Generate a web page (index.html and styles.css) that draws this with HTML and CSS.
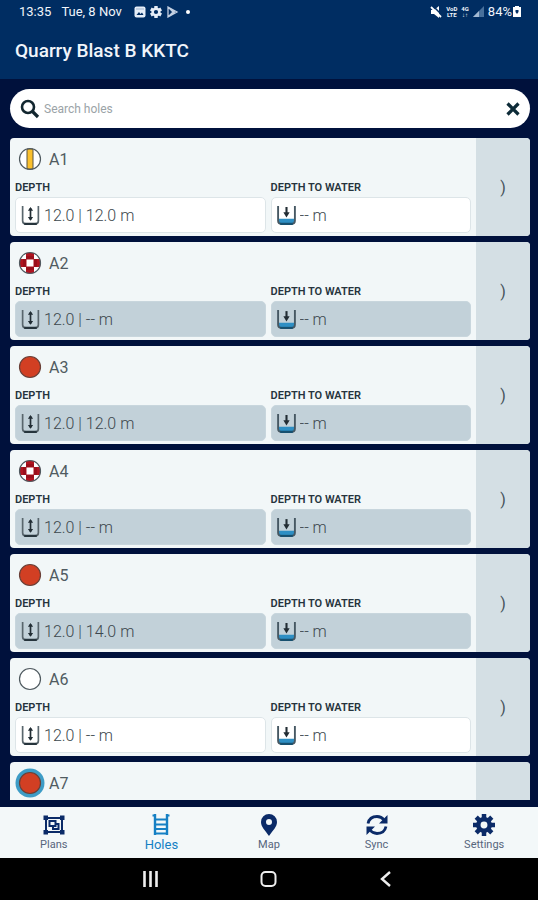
FILE: index.html
```html
<!DOCTYPE html>
<html lang="en">
<head>
  <meta charset="UTF-8" />
  <meta name="viewport" content="width=device-width, initial-scale=1.0" />
  <title>Quarry Blast B KKTC</title>
  <link rel="stylesheet" href="styles.css">
</head>
<body>
  <svg class="sprite" aria-hidden="true">
    <symbol id="icon-depth" viewBox="0 0 18 20">
      <path d="M1.500 1v14q0 3 3 3h9q3 0 3-3V1" fill="none" stroke="#59666d" stroke-width="1.600"/>
      <path d="M3 18h12" stroke="#26343c" stroke-width="2"/>
      <path d="M9 3v11" stroke="#222d34" stroke-width="1.600"/>
      <path d="M6.500 5.500L9 2l2.500 3.500zM6.500 11.500L9 15l2.500-3.500z" fill="#222d34"/>
    </symbol>
    <symbol id="icon-water" viewBox="0 0 18 20">
      <path d="M1.500 13h15v3q0 2-2 2h-11q-2 0-2-2z" fill="#2e8fc4"/>
      <path d="M1 1v14q0 3 3 3h10q3 0 3-3V1" fill="none" stroke="#465863" stroke-width="1.800"/>
      <path d="M3 18h12" stroke="#17506f" stroke-width="2"/>
      <path d="M9 2v6" stroke="#222d34" stroke-width="2"/>
      <path d="M6 7h6l-3 5z" fill="#222d34"/>
    </symbol>
    <symbol id="hole-primed" viewBox="0 0 30 30">
      <circle cx="15" cy="15" r="10.500" fill="#fff"/>
      <path d="M12 5h6v20h-6z" fill="#fbc02d" stroke="#5c5540" stroke-width="1"/>
      <circle cx="15" cy="15" r="10.500" fill="none" stroke="#505a60" stroke-width="1.200"/>
    </symbol>
    <symbol id="hole-check" viewBox="0 0 30 30">
      <circle cx="15" cy="15" r="10.500" fill="#fff"/>
      <path d="M11 5q4-1 8 0v6h6q1 4 0 8h-6v6q-4 1-8 0v-6H5q-1-4 0-8h6z" fill="#b01420"/>
      <path d="M8 11h3v8H8zM19 11h3v8h-3zM11 8h8v3h-8zM11 19h8v3h-8z" fill="#9a101c"/>
      <path d="M11.500 11.500h7v7h-7z" fill="#fff"/>
      <circle cx="15" cy="15" r="10.500" fill="none" stroke="#505a60" stroke-width="1.200"/>
    </symbol>
    <symbol id="hole-loaded" viewBox="0 0 30 30">
      <circle cx="15" cy="15" r="10.500" fill="#d23f23" stroke="#6a4038" stroke-width="1.200"/>
    </symbol>
    <symbol id="hole-active" viewBox="0 0 30 30">
      <circle cx="15" cy="15" r="14.500" fill="#3d9cc6"/>
      <circle cx="15" cy="15" r="10.500" fill="#d23f23" stroke="#6a4038" stroke-width="1.200"/>
    </symbol>
    <symbol id="hole-empty" viewBox="0 0 30 30">
      <circle cx="15" cy="15" r="10.500" fill="#fff" stroke="#505a60" stroke-width="1.200"/>
    </symbol>
  </svg>

  <header class="app-header">
    <div class="status">
      <span class="time">13:35</span>
      <span class="date">Tue, 8 Nov</span>
      <svg width="12" height="12" viewBox="0 0 12 12"><rect x=".5" y=".5" width="11" height="11" rx="2" fill="#e6eef8"/><path d="M2.500 9l2.500-3 1.500 2 1.500-1.500L9.500 9z" fill="#002d62"/><path d="M2 3h8" stroke="#9fb3cd" stroke-width="1"/></svg>
      <svg width="12" height="12" viewBox="0 0 12 12"><path d="M6 0v12M.8 3l10.400 6M.8 9l10.400-6" stroke="#e6eef8" stroke-width="3.400"/><circle cx="6" cy="6" r="3.300" fill="#002d62" stroke="#e6eef8" stroke-width="2.400"/></svg>
      <svg width="13" height="12" viewBox="0 0 13 12"><path d="M2 1l9 5-9 5zM2 1l5 5-5 5M6 3.500l3 4M6 8.500l3-4" fill="none" stroke="#c3d0e2" stroke-width="1.300"/></svg>
      <span class="dot"></span>
      <span class="status-right">
        <svg width="12" height="12" viewBox="0 0 12 12"><path d="M1 4h3l5-4v12L4 8H1z" fill="#fff"/><path d="M3 0l9 9" stroke="#002d62" stroke-width="1.500"/><path d="M1 1l10 10" stroke="#fff" stroke-width="1.800"/></svg>
        <span class="tiny">VoD<br>LTE</span>
        <span class="tiny">4G<br>↓↑</span>
        <svg width="11" height="11" viewBox="0 0 11 11"><path d="M11 0v11H0z" fill="#48709b"/><path d="M6 5v6H0z" fill="#a3b9d2"/></svg>
        <span class="battery">84%</span>
        <svg width="8" height="11" viewBox="0 0 8 11"><path d="M2 0h4v1h2v10H0V1h2z" fill="#fff"/><path d="M2.500 4h3v2L4 8 2.500 6z" fill="#002d62"/></svg>
      </span>
    </div>
    <h1>Quarry Blast B KKTC</h1>
  </header>

  <main>
    <form class="search">
      <svg width="20" height="20" viewBox="0 0 20 20"><circle cx="8" cy="8" r="6" fill="none" stroke="#12262f" stroke-width="2.600"/><path d="M12.500 12.500l5.500 5.500" stroke="#12262f" stroke-width="3.200"/></svg>
      <input type="text" placeholder="Search holes" aria-label="Search holes">
      <button type="reset" aria-label="Clear search">
        <svg width="14" height="14" viewBox="0 0 14 14"><path d="M1.500 1.500l11 11M12.500 1.500l-11 11" stroke="#0d2b38" stroke-width="3.200"/></svg>
      </button>
    </form>
    <div class="holes" id="holes"></div>
  </main>

  <nav class="tabs">
    <a href="#plans">
      <svg width="22" height="22" viewBox="0 0 22 22" fill="none" stroke="#0b2b68"><path d="M3 4h16v14H3z" stroke-width="2"/><path d="M.5 1.500h4.500v4.500H.5zM17 1.500h4.500v4.500H17zM.5 16h4.500v4.500H.5zM17 16h4.500v4.500H17z" fill="#0b2b68" stroke="none"/><path d="M6.500 7h6v5h-6zM12.500 10h3v5H10v-3" stroke-width="2"/></svg>
      <span>Plans</span>
    </a>
    <a href="#holes" class="active">
      <svg width="22" height="22" viewBox="0 0 22 22" fill="none" stroke="#1580c4"><path d="M5 0v21M17 0v21" stroke-width="2.400"/><path d="M2.500 1.500H6M16 1.500h3.500M5 5.500h12M5 10.500h12M5 15h12M5 19.500h12" stroke-width="2"/></svg>
      <span>Holes</span>
    </a>
    <a href="#map">
      <svg width="22" height="22" viewBox="0 0 22 22"><path d="M11 0a8 8 0 0 0-8 8c0 5 4 8 8 14 4-6 8-9 8-14a8 8 0 0 0-8-8zm0 5a3 3 0 1 1 0 6 3 3 0 0 1 0-6z" fill="#0b2b68"/></svg>
      <span>Map</span>
    </a>
    <a href="#sync">
      <svg width="22" height="22" viewBox="0 0 22 22"><path d="M2 9.500C3 5 6.500 2.500 11 2.500c3 0 5.500 1.500 7 3.500M20 12.500c-1 4.500-4.500 7-9 7-3 0-5.500-1.500-7-3.500" fill="none" stroke="#0b2b68" stroke-width="2.800"/><path d="M21.500 1v8.500H13zM.5 21v-8.500H9z" fill="#0b2b68"/></svg>
      <span>Sync</span>
    </a>
    <a href="#settings">
      <svg width="22" height="22" viewBox="0 0 22 22"><path d="M11 0v22M0 11h22M3.200 3.200l15.600 15.600M18.800 3.200L3.200 18.800" stroke="#0b2b68" stroke-width="4.500"/><circle cx="11" cy="11" r="5.700" fill="#f3f8f9" stroke="#0b2b68" stroke-width="4.500"/></svg>
      <span>Settings</span>
    </a>
  </nav>

  <footer class="system-bar">
    <button aria-label="Recent apps"><svg width="18" height="18" viewBox="0 0 18 18"><path d="M2.500 1v16M8.500 1v16M14.500 1v16" stroke="#eee" stroke-width="2.600"/></svg></button>
    <button aria-label="Home"><svg width="18" height="18" viewBox="0 0 18 18"><rect x="1.500" y="2" width="14" height="14" rx="4" fill="none" stroke="#eee" stroke-width="2"/></svg></button>
    <button aria-label="Back"><svg width="18" height="18" viewBox="0 0 18 18"><path d="M12 2L4 9l8 7" fill="none" stroke="#eee" stroke-width="2.400"/></svg></button>
  </footer>

  <script>
    const holes = [
      { name: 'A1', icon: 'primed', depth: '12.0 | 12.0 m', open: true },
      { name: 'A2', icon: 'check', depth: '12.0 | -- m' },
      { name: 'A3', icon: 'loaded', depth: '12.0 | 12.0 m' },
      { name: 'A4', icon: 'check', depth: '12.0 | -- m' },
      { name: 'A5', icon: 'loaded', depth: '12.0 | 14.0 m' },
      { name: 'A6', icon: 'empty', depth: '12.0 | -- m', open: true },
      { name: 'A7', icon: 'active' }
    ];

    function field(id, label, icon, value, open) {
      return `
        <div>
          <label for="${id}">${label}</label>
          <div class="field ${open ? '' : 'locked'}">
            <svg width="19" height="21"><use href="#icon-${icon}"/></svg>
            <input id="${id}" type="text" value="${value}" ${open ? '' : 'readonly'}>
          </div>
        </div>`;
    }

    // A hole without a depth yet only shows its heading
    document.getElementById('holes').innerHTML = holes.map(h => `
      <article class="card ${h.depth ? '' : 'pending'}">
        <div class="card-main">
          <h2><svg width="30" height="30"><use href="#hole-${h.icon}"/></svg>${h.name}</h2>
          ${h.depth ? `<div class="fields">
            ${field(h.name + '-depth', 'DEPTH', 'depth', h.depth, h.open)}
            ${field(h.name + '-water', 'DEPTH TO WATER', 'water', '-- m', h.open)}
          </div>` : ''}
        </div>
        <button class="open" aria-label="Open ${h.name}">${h.depth ? ')' : ''}</button>
      </article>`).join('');
  </script>
</body>
</html>
```
FILE: styles.css
```css
* {
  box-sizing: border-box;
}
body {
  margin: 0;
  height: 100vh;
  display: flex;
  flex-direction: column;
  font-family: Roboto, "Liberation Sans", sans-serif;
  background: #00113c;
  overflow: hidden;
}
svg {
  display: block;
  flex: none;
}
button {
  border: 0;
  padding: 0;
  background: none;
  font-family: inherit;
}
input {
  border: 0;
  padding: 0;
  width: 100%;
  min-width: 0;
  background: none;
  font-family: inherit;
  outline: none;
}
.sprite {
  position: absolute;
  width: 0;
  height: 0;
}
.app-header {
  flex: none;
  background: #002d62;
  color: #f1f5fb;
  padding: 3px 15px 16px;
}
.status {
  display: flex;
  align-items: center;
  gap: 4px;
  height: 17px;
  padding: 0 2px 0 4px;
  font-size: 13px;
}
.time {
  margin-right: 6px;
}
.date {
  margin-right: 8px;
}
.dot {
  width: 4px;
  height: 4px;
  margin-left: 3px;
  border-radius: 50%;
  background: #fff;
}
.status-right {
  display: flex;
  align-items: center;
  gap: 4px;
  margin-left: auto;
}
.tiny {
  font-size: 6px;
  line-height: 6px;
  font-weight: 700;
  text-align: center;
}
.battery {
  margin-right: -3px;
}
h1 {
  margin: 19px 0 0;
  font-size: 19px;
  line-height: 24px;
  font-weight: 500;
}
main {
  flex: 1;
  min-height: 0;
  display: flex;
  flex-direction: column;
  gap: 10px;
  padding: 10px 8px 7px 10px;
}
.search {
  flex: none;
  display: flex;
  align-items: center;
  gap: 4px;
  height: 39px;
  padding: 0 10px;
  border-radius: 20px;
  background: #fff;
}
.search input {
  font-size: 12px;
}
.search input::placeholder {
  color: #9ba3a7;
}
.holes {
  flex: 1;
  min-height: 0;
  display: flex;
  flex-direction: column;
  gap: 6px;
  overflow: hidden;
}
.card {
  flex: none;
  display: flex;
  border-radius: 4px;
  overflow: hidden;
  background: #f2f7f8;
}
.pending {
  flex: 1;
  border-radius: 4px 4px 0 0;
}
.card-main {
  flex: 1;
  min-width: 0;
  padding: 6px 5px 3px;
}
.pending .card-main {
  padding-bottom: 0;
}
h2 {
  display: flex;
  align-items: center;
  gap: 4px;
  height: 30px;
  margin: 0;
  font-size: 16px;
  font-weight: 400;
  color: #505b61;
}
.fields {
  display: grid;
  grid-template-columns: 5fr 4fr;
  gap: 5px;
  margin-top: 8px;
}
label {
  display: block;
  font-size: 11px;
  line-height: 12px;
  font-weight: 600;
  color: #26343d;
}
.field {
  display: flex;
  align-items: center;
  gap: 4px;
  height: 36px;
  margin-top: 3px;
  padding: 0 5px;
  border: 1px solid #dde5e8;
  border-radius: 5px;
  background: #fff;
}
.locked {
  background: #c2d1d9;
  border-color: #c8d6dd;
}
.field input {
  font-size: 16px;
  font-weight: 300;
  color: #3c474d;
}
.open {
  flex: none;
  width: 54px;
  background: #d4dfe4;
  color: #46535a;
  font-size: 16px;
}
.tabs {
  flex: none;
  display: grid;
  grid-template-columns: repeat(5, 1fr);
  height: 51px;
  padding-top: 7px;
  background: #f3f8f9;
}
.tabs a {
  display: flex;
  flex-direction: column;
  align-items: center;
  gap: 2px;
  font-size: 11px;
  line-height: 14px;
  color: #56657c;
  text-decoration: none;
}
.tabs .active {
  font-size: 13px;
  color: #1580c4;
}
.system-bar {
  flex: none;
  display: flex;
  justify-content: center;
  gap: 100px;
  height: 42px;
  background: #000;
}
```
